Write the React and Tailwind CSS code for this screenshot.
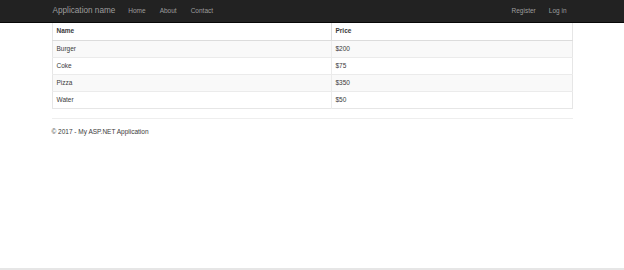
const items = [
  { name: "Burger", price: "$200" },
  { name: "Coke", price: "$75" },
  { name: "Pizza", price: "$350" },
  { name: "Water", price: "$50" },
];

const App = () => {
  return (
    <div
      className="min-h-[270px] flex flex-col bg-white text-[#3a3a3a] border-b-2 border-[#e6e6e6]"
      style={{ fontFamily: '"Liberation Sans", Arial, sans-serif' }}
    >
      <nav className="h-[23px] bg-[#222] border-b border-[#080808]">
        <div className="w-[521px] mx-auto h-full flex items-center justify-between">
          <div className="flex items-center">
            <span className="text-[8.2px] text-[#9d9d9d] pl-[1px]">Application name</span>
            <ul className="flex items-center gap-[14px] ml-[13px] text-[6.5px] text-[#9d9d9d]">
              <li>Home</li>
              <li>About</li>
              <li>Contact</li>
            </ul>
          </div>
          <ul className="flex items-center gap-[13px] mr-[6px] text-[6.5px] text-[#9d9d9d]">
            <li>Register</li>
            <li>Log in</li>
          </ul>
        </div>
      </nav>

      <main className="w-[521px] mx-auto">
        <table className="w-full border-collapse text-[6.5px] border border-[#e6e6e6] border-t-0">
          <thead>
            <tr className="h-[17px]">
              <th className="text-left font-bold pl-[4px] w-[279px] border-b border-r border-[#dcdcdc]">Name</th>
              <th className="text-left font-bold pl-[4px] border-b border-[#dcdcdc]">Price</th>
            </tr>
          </thead>
          <tbody>
            {items.map((item, i) => (
              <tr key={item.name} className={`h-[17px] ${i % 2 === 0 ? "bg-[#f9f9f9]" : "bg-white"}`}>
                <td className="pl-[4px] border-t border-r border-[#ebebeb]">{item.name}</td>
                <td className="pl-[4px] border-t border-[#ebebeb]">{item.price}</td>
              </tr>
            ))}
          </tbody>
        </table>

        <hr className="mt-[9px] border-t border-[#eee]" />
        <footer className="mt-[8px] text-[6.5px]">
          <p>© 2017 - My ASP.NET Application</p>
        </footer>
      </main>
    </div>
  );
};

export default App;
